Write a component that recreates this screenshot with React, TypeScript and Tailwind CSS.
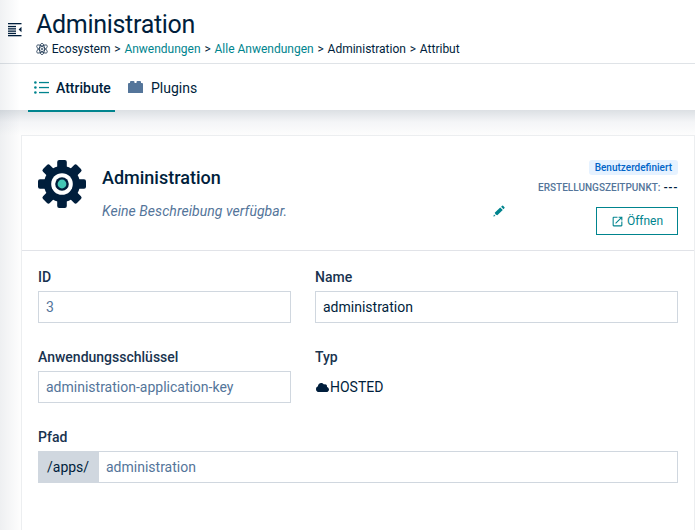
import type { ReactNode } from "react";
import { MdOpenInNew } from "react-icons/md";
import { FaCloud } from "react-icons/fa";

function MenuIcon() {
  return (
    <svg className="h-[14px] w-[14px] shrink-0" viewBox="0 0 14 14" fill="#001e3c">
      <rect width="13.5" height="1.3" />
      <rect y="2.9" width="8" height="1.3" />
      <rect y="5.2" width="8" height="1.3" />
      <rect y="7.5" width="8" height="1.3" />
      <rect y="9.8" width="8" height="1.3" />
      <rect y="12" width="13.5" height="1.3" />
      <path d="M13.5 3.8v5.4L10.6 6.5z" />
    </svg>
  );
}

function AtomIcon() {
  return (
    <svg className="h-3 w-3 shrink-0" viewBox="0 0 24 24" fill="none" stroke="#001e3c" strokeWidth="1.35">
      <ellipse cx="12" cy="12" rx="5" ry="11.3" />
      <ellipse cx="12" cy="12" rx="5" ry="12.4" transform="rotate(55 12 12)" />
      <ellipse cx="12" cy="12" rx="5" ry="12.4" transform="rotate(-55 12 12)" />
      <circle cx="12" cy="12" r="1.7" />
    </svg>
  );
}

function ListIcon() {
  return (
    <svg className="h-[13px] w-[15px]" viewBox="0 0 15 13" fill="#00848e">
      {[1.5, 6.5, 11.5].map((y) => (
        <g key={y}>
          <circle cx="1.4" cy={y} r="1.3" />
          <rect x="5" y={y - 0.6} width="10" height="1.3" />
        </g>
      ))}
    </svg>
  );
}

function BrickIcon() {
  return (
    <svg className="h-[13px] w-[15px]" viewBox="0 0 15 13" fill="#54759a">
      <path d="M0 3q0-1 1-1h1V1q0-1 1-1h2.5q1 0 1 1v1h2V1q0-1 1-1H12q1 0 1 1v1h1q1 0 1 1v8.5q0 .5-.5.5H.5q-.5 0-.5-.5z" />
    </svg>
  );
}

function GearIcon() {
  return (
    <svg className="h-12 w-12 shrink-0" viewBox="0 0 48 48">
      <g fill="#001e3c">
        {[0, 45, 90, 135].map((a) => (
          <rect key={a} x="19.2" y="0" width="9.6" height="48" rx="2" transform={`rotate(${a} 24 24)`} />
        ))}
        <circle cx="24" cy="24" r="18" />
      </g>
      <circle cx="24" cy="24" r="10.8" fill="#fff" />
      <circle cx="24" cy="24" r="6.8" fill="#001e3c" />
      <circle cx="24" cy="24" r="4.4" fill="#43c6b5" />
    </svg>
  );
}

function PencilIcon() {
  return (
    <svg className="mr-[2px] h-[12px] w-[12px]" viewBox="0 0 12 12" fill="#00848e">
      <path d="M.3 11.6l.7-2.2 1.5 1.5zM1.7 7.7l5.5-5.3 2.6 2.6-5.5 5.3q-2-.4-2.6-2.6zM8.1 1.8l1.1-1q.5-.4.9 0l1.4 1.4q.4.4 0 .9l-1 1.1z" />
    </svg>
  );
}

function Field({ label, children }: { label: string; children: ReactNode }) {
  return (
    <div className="h-20">
      <div className="mb-1 text-sm leading-5 font-medium text-[#19334f]">{label}</div>
      {children}
    </div>
  );
}

const input = "flex h-8 items-center border border-[#d0d7df] bg-white px-[7px] text-sm";

export default function App() {
  return (
    <div className="relative h-[530px] w-[695px] overflow-hidden bg-[#fdfdfd] font-[Roboto,sans-serif] text-[#001e3c]">
      <header className="flex h-16 border-b border-[#dfe3e7] bg-white pl-2">
        <div className="w-7 pt-[23px]"><MenuIcon /></div>
        <div>
          <h1 className="mt-[5px] h-[35px] text-[25px] leading-10 tracking-[-0.3px]">Administration</h1>
          <nav className="mt-px flex h-4 items-center gap-[3.8px] text-xs whitespace-nowrap">
            <AtomIcon />
            <span>Ecosystem</span><span>&gt;</span>
            <a className="text-[#00848e]">Anwendungen</a><span>&gt;</span>
            <a className="text-[#00848e]">Alle Anwendungen</a><span>&gt;</span>
            <span>Administration</span><span>&gt;</span><span>Attribut</span>
          </nav>
        </div>
      </header>
      <div className="flex h-[46px] bg-white pl-7">
        <div className="z-10 flex h-12 w-[87px] shrink-0 items-center border-b-2 border-[#00848e] pl-[5.5px]">
          <ListIcon /><span className="ml-[7.5px] pt-[2px] text-sm font-medium">Attribute</span>
        </div>
        <div className="flex h-12 items-center pb-0.5 pl-[13px]">
          <BrickIcon /><span className="ml-2 pt-[2px] text-sm">Plugins</span>
        </div>
      </div>
      <main className="h-[420px] bg-linear-to-b from-[#dce0e4] via-[#f4f5f7] via-[12px] to-[#fdfdfd] to-[25px] pt-[25px] pl-[21px]">
        <section className="h-[400px] w-[674px] border border-[#eceef0] bg-white">
          <div className="flex h-[115px] border-b border-[#e1e3e8] pr-4 pl-4">
            <div className="pt-6"><GearIcon /></div>
            <div className="ml-4 w-[405px] pt-[30px]">
              <h2 className="text-lg leading-6 font-medium">Administration</h2>
              <div className="mt-[11px] flex items-center justify-between text-sm leading-5 text-[#54759a] italic">
                <span className="tracking-[0.06px]">Keine Beschreibung verfügbar.</span><PencilIcon />
              </div>
            </div>
            <div className="flex flex-1 flex-col items-end pt-6">
              <span className="flex h-[15px] items-center rounded-[3px] bg-[#e6f2ff] px-1.5 text-[10px] font-medium text-[#0064c8]">Benutzerdefiniert</span>
              <div className="mt-[5px] flex items-center gap-[3px] text-[10px] leading-4 font-medium whitespace-nowrap text-[#54759a]">ERSTELLUNGSZEITPUNKT: <b className="text-[11px] font-bold tracking-[0.5px] text-[#001e3c]">---</b></div>
              <button className="mt-[11px] flex h-7 w-[82px] shrink-0 items-center justify-center gap-[3px] border border-[#00848e] text-xs text-[#00848e]"><MdOpenInNew className="h-[13px] w-[13px]" />Öffnen</button>
            </div>
          </div>
          <div className="pt-4 pr-4 pl-4">
            <div className="grid grid-cols-[253px_363px] gap-x-6">
              <Field label="ID"><div className={`${input} text-[#54759a]`}>3</div></Field>
              <Field label="Name"><div className={input}>administration</div></Field>
              <Field label="Anwendungsschlüssel"><div className={`${input} text-[#54759a]`}>administration-application-key</div></Field>
              <Field label="Typ"><div className="flex h-8 items-center text-sm"><FaCloud className="ml-px h-[13px] w-[13px]" /><span className="ml-px">HOSTED</span></div></Field>
            </div>
            <Field label="Pfad">
              <div className="flex">
                <span className="flex h-8 w-[61px] items-center bg-[#d0d7df] pl-[9px] text-sm">/apps/</span>
                <div className={`${input} flex-1 border-l-0 text-[#54759a]`}>administration</div>
              </div>
            </Field>
          </div>
        </section>
      </main>
      <div className="pointer-events-none absolute inset-y-0 left-0 w-5 bg-linear-to-r from-[#001e3c]/6 to-transparent" />
    </div>
  );
}
